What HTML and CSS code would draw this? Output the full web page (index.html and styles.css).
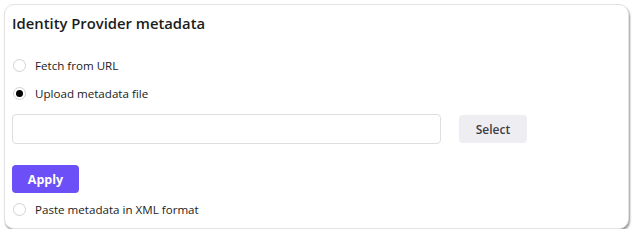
FILE: index.html
```html
<!DOCTYPE html>
<html lang="en">
<head>
<meta charset="utf-8">
<title>Identity Provider metadata</title>
<link rel="stylesheet" href="styles.css">
</head>
<body>
<section class="card">
  <h2 class="title">Identity Provider metadata</h2>
  <div class="options">
    <label class="radio"><span class="dot"></span><span class="label">Fetch from URL</span></label>
    <label class="radio"><span class="dot checked"></span><span class="label">Upload metadata file</span></label>
  </div>
  <div class="file-row">
    <div class="file-input"></div>
    <button class="btn-select" type="button">Select</button>
  </div>
  <button class="btn-apply" type="button">Apply</button>
  <label class="radio paste"><span class="dot"></span><span class="label">Paste metadata in XML format</span></label>
</section>
</body>
</html>
```

FILE: styles.css
```css
html, body {
  margin: 0;
  padding: 0;
  background: #ffffff;
}
body {
  font-family: "Open Sans", "Noto Sans", sans-serif;
  color: #202020;
}
.card {
  box-sizing: border-box;
  width: 625px;
  height: 225px;
  margin: 4px 0 0 4px;
  padding: 6px 7px 0 7px;
  border-radius: 10px;
  background: #fff;
  border: 1px solid #e2e2e2;
  box-shadow: 1px 2px 2px rgba(0,0,0,0.4);
  display: flex;
  flex-direction: column;
  align-items: flex-start;
}
.title {
  margin: 0;
  font-size: 14.8px;
  line-height: 24px;
  font-weight: 600;
  color: #1c1c1c;
}
.options {
  display: flex;
  flex-direction: column;
  gap: 8px;
  margin-top: 20px;
}
.radio {
  display: flex;
  align-items: center;
  height: 20px;
  gap: 9px;
  font-size: 11.6px;
  color: #222;
}
.dot {
  box-sizing: border-box;
  width: 13px;
  height: 13px;
  margin-left: 1px;
  border-radius: 50%;
  border: 1px solid #d2d2d2;
  background: #fff;
  display: flex;
  align-items: center;
  justify-content: center;
}
.dot.checked::after {
  content: "";
  width: 7px;
  height: 7px;
  border-radius: 50%;
  background: #000;
}
.file-row {
  display: flex;
  align-items: center;
  gap: 18px;
  margin-top: 11px;
}
.file-input {
  box-sizing: border-box;
  width: 429px;
  height: 30px;
  border: 1px solid #dedede;
  border-radius: 4px;
  background: #fff;
}
.btn-select {
  width: 68px;
  height: 28px;
  border: none;
  border-radius: 4px;
  background: #eeeef2;
  color: #3c3c46;
  font-family: inherit;
  font-size: 12px;
  font-weight: 600;
  padding: 0;
}
.btn-apply {
  width: 67px;
  height: 28px;
  margin-top: 21px;
  border: none;
  border-radius: 4px;
  background: #6c4ff6;
  color: #fff;
  font-family: inherit;
  font-size: 12.5px;
  font-weight: 700;
  padding: 0;
}
.paste {
  margin-top: 6px;
}
```
